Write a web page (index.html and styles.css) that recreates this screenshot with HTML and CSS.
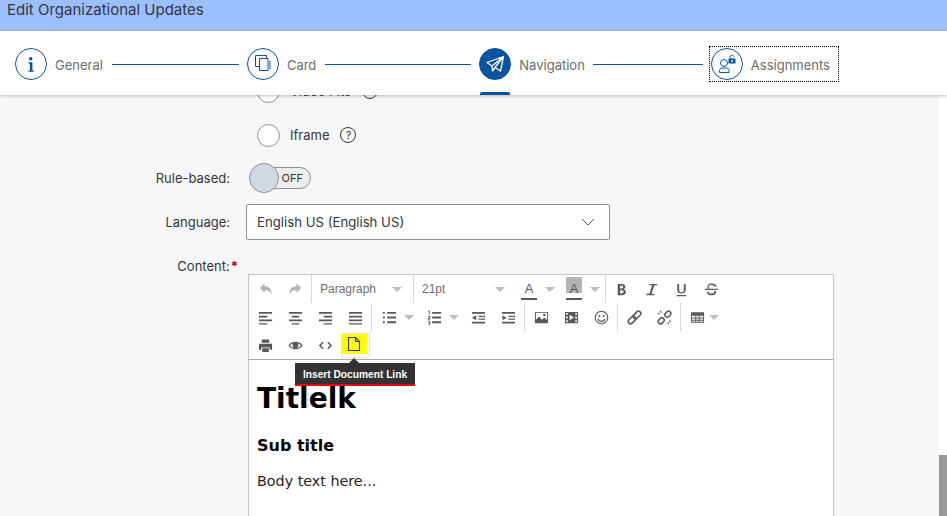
FILE: index.html
```html
<!DOCTYPE html>
<html lang="en">
<head>
  <meta charset="UTF-8" />
  <title>Edit Organizational Updates</title>
  <link rel="stylesheet" href="styles.css">
</head>
<body>

<div class="page">
  <header class="title-bar">Edit Organizational Updates</header>

  <!-- wizard steps -->
  <nav class="steps">
    <div class="step">
      <span class="step-icon">
        <svg viewBox="0 0 32 32" width="32" height="32"><path class="fill" d="M14.200 9.200h3v3h-3zM13.400 14.200h4v8.200h1.400v1.400h-5.400v-1.400h1.400v-6.800h-1.400z"/></svg>
      </span>
      <span class="step-label">General</span>
    </div>
    <span class="step-line line-general"></span>
    <div class="step">
      <span class="step-icon">
        <svg viewBox="0 0 32 32" width="32" height="32"><path class="stroke" d="M12 18.500H8.500V7.500h11V10.500M12.500 10.500h8.500v12h-8.500zM23 12.500v9"/></svg>
      </span>
      <span class="step-label">Card</span>
    </div>
    <span class="step-line line-card"></span>
    <div class="step step-active">
      <span class="step-icon">
        <svg viewBox="0 0 32 32" width="32" height="32"><path class="stroke-white" d="M8 14.500 24.500 8.500 21.500 23 16 19.500 13.500 23 13 18zM13 18 24.500 8.500M16 19.500 24.500 8.500"/></svg>
      </span>
      <span class="step-label">Navigation</span>
    </div>
    <span class="step-line line-nav"></span>
    <div class="step step-focus">
      <span class="step-icon">
        <svg viewBox="0 0 32 32" width="32" height="32"><circle class="stroke" cx="13" cy="15" r="3.500"/><path class="stroke" d="M8.500 24.500v-2c0-1.500 1-2.500 2.500-2.500h4.500c1.500 0 2.500 1 2.500 2.500v2z"/><path class="fill" d="M17.500 10.500h7v5h-7z"/><path class="stroke" d="M19 10.500V9c0-2.400 3.500-2.400 3.800-.3"/><path class="white" d="M20.300 12h1.400v2h-1.400z"/></svg>
      </span>
      <span class="step-label">Assignments</span>
    </div>
  </nav>

  <div class="body-wrap">
    <main class="form">
      <div class="form-row radio-row">
        <span class="form-label"></span>
        <div class="radio-option">
          <span class="radio"></span>
          <span>Video Fits</span>
          <span class="help">?</span>
        </div>
      </div>
      <div class="form-row radio-row">
        <span class="form-label"></span>
        <div class="radio-option">
          <span class="radio"></span>
          <span>Iframe</span>
          <span class="help">?</span>
        </div>
      </div>

      <div class="form-row switch-row">
        <label class="form-label">Rule-based:</label>
        <div class="switch">
          <span class="switch-track">OFF</span>
          <span class="switch-knob"></span>
        </div>
      </div>

      <div class="form-row select-row">
        <label class="form-label">Language:</label>
        <div class="select">
          <span>English US (English US)</span>
          <svg viewBox="0 0 14 8" width="14" height="8"><path d="M1 1l6 6 6-6" fill="none" stroke="#5a5f64" stroke-width="1"/></svg>
        </div>
      </div>

      <div class="form-row content-row">
        <label class="form-label">Content:<em>*</em></label>
        <div class="editor">
          <div class="toolbar">
            <div class="tb-row">
              <button class="tb-btn off"><svg viewBox="0 0 16 16"><path d="M2 6l5-4.500v3c5 0 7.500 3 7.500 9-1.500-3.500-3.500-4.800-7.500-4.800v3z"/></svg></button>
              <button class="tb-btn off"><svg viewBox="0 0 16 16"><path d="M14 6 9 1.500v3c-5 0-7.500 3-7.500 9C3 10 5 8.700 9 8.700v3z"/></svg></button>
              <span class="tb-sep"></span>
              <div class="tb-combo combo-format"><span>Paragraph</span><i class="caret"></i></div>
              <span class="tb-sep"></span>
              <div class="tb-combo combo-size"><span>21pt</span><i class="caret"></i></div>
              <button class="tb-btn letter"><span class="letter-a">A</span><b class="under"></b></button>
              <i class="caret split"></i>
              <button class="tb-btn letter back"><span class="letter-a">A</span><b class="under"></b></button>
              <i class="caret split"></i>
              <span class="tb-sep"></span>
              <button class="tb-btn"><svg viewBox="0 0 16 16"><path fill-rule="evenodd" d="M4 2h4.500c4.500 0 4.500 5 1.500 5.700 4 .6 3.500 6.300-1 6.300H4zM6.500 4v2.900h1.700c2 0 2-2.900 0-2.900zM6.500 8.800V12h2.100c2.200 0 2.200-3.200 0-3.200z"/></svg></button>
              <button class="tb-btn"><svg viewBox="0 0 16 16"><path d="M6 2h8v1.500h-3L8 12.500h3V14H2.500v-1.500h3.200l3-9H6z"/></svg></button>
              <button class="tb-btn"><svg viewBox="0 0 16 16"><path d="M3.500 2h2v6.500c0 3.300 5 3.300 5 0V2h2v6.500c0 5-9 5-9 0zM3 13.800h10v1.300H3z"/></svg></button>
              <button class="tb-btn"><svg viewBox="0 0 16 16"><path d="M1 7.300h14v1.200H1zM11.500 5C11 3 5.500 2.300 5 4.500c-.3 1.300.5 2 1.500 2.500H4C2.600 3 5 1.500 8 1.500c3 0 5 1 5.500 3.500zM10.800 9.500c.8 2-1.300 3-3 2.800-1.500 0-3-.7-3-2H3c.2 3 3 3.800 5 3.800 4 0 5.500-2.200 4.800-4.600z"/></svg></button>
            </div>
            <div class="tb-row">
              <button class="tb-btn"><svg viewBox="0 0 16 16"><path d="M1 2h14v2H1zM1 6h9v2H1zM1 10h14v2H1zM1 14h9v1.500H1z"/></svg></button>
              <button class="tb-btn"><svg viewBox="0 0 16 16"><path d="M1 2h14v2H1zM4 6h8v2H4zM1 10h14v2H1zM4 14h8v1.500H4z"/></svg></button>
              <button class="tb-btn"><svg viewBox="0 0 16 16"><path d="M1 2h14v2H1zM6 6h9v2H6zM1 10h14v2H1zM6 14h9v1.500H6z"/></svg></button>
              <button class="tb-btn"><svg viewBox="0 0 16 16"><path d="M1 2h14v2H1zM1 6h14v2H1zM1 10h14v2H1zM1 14h14v1.500H1z"/></svg></button>
              <span class="tb-sep"></span>
              <button class="tb-btn list"><svg viewBox="0 0 16 16"><path d="M1 2h2v2H1zM1 7h2v2H1zM1 12h2v2H1zM5.500 2H15v2H5.500zM5.500 7H15v2H5.500zM5.500 12H15v2H5.500z"/></svg></button>
              <i class="caret split"></i>
              <button class="tb-btn list-num"><svg viewBox="0 0 16 16"><path d="M5.500 2H15v2H5.500zM5.500 7H15v2H5.500zM5.500 12H15v2H5.500z"/><path d="M1.500 .8h1.500v4H2V2H1.500zM1 6.500h2.500v2.200L2 9.800h1.500v.7H1V9l1.500-1.100v-.7H1zM1 11.500h2.500v4H1v-.7h1.500V14H1.500v-.6h1v-1.200H1z"/></svg></button>
              <i class="caret split-tight"></i>
              <button class="tb-btn"><svg viewBox="0 0 16 16"><path d="M1 2h14v2H1zM8 6h7v1.500H8zM8 9h7v1.500H8zM1 12.500h14v2H1zM1 8.200 5.500 5.500v5.500z"/></svg></button>
              <button class="tb-btn"><svg viewBox="0 0 16 16"><path d="M1 2h14v2H1zM8 6h7v1.500H8zM8 9h7v1.500H8zM1 12.500h14v2H1zM6 8.200 1.500 5.500v5.500z"/></svg></button>
              <span class="tb-sep"></span>
              <button class="tb-btn"><svg viewBox="0 0 16 16"><path fill-rule="evenodd" d="M1 2h14v12H1zM2 3v7.500L5.500 7l3 3.500L11 8l3 3V3z"/><circle cx="11" cy="5.200" r="1.300"/></svg></button>
              <button class="tb-btn"><svg viewBox="0 0 16 16"><path fill-rule="evenodd" d="M1 2h14v12H1zM2.200 3.200v1.800H4V3.200zM2.200 7v2H4V7zM2.200 11v1.800H4V11zM12 3.200V5h1.800V3.200zM12 7v2h1.800V7zM12 11v1.800h1.800V11zM6 5v6l4.500-3z"/></svg></button>
              <button class="tb-btn"><svg viewBox="0 0 16 16"><circle cx="8" cy="8" r="6.700" class="line"/><circle cx="5.800" cy="6.300" r="1.100"/><circle cx="10.200" cy="6.300" r="1.100"/><path class="line" d="M4.300 9.500c1 3.500 6.400 3.500 7.400 0"/></svg></button>
              <span class="tb-sep"></span>
              <button class="tb-btn"><svg viewBox="0 0 16 16"><g transform="rotate(-45 8 8)"><rect class="line-thick" x="-.5" y="5.500" width="9.500" height="5" rx="2.500"/><rect class="line-thick" x="7" y="5.500" width="9.500" height="5" rx="2.500"/></g></svg></button>
              <button class="tb-btn"><svg viewBox="0 0 16 16"><g transform="rotate(-45 8 8)"><rect class="line-thick" x="-.5" y="5.500" width="7" height="5" rx="2.500"/><rect class="line-thick" x="9.500" y="5.500" width="7" height="5" rx="2.500"/></g><path class="line" d="M3.500 .8l1 2.200M.8 3.500l2.200 1M12.500 15.200l-1-2.200M15.200 12.500l-2.200-1"/></svg></button>
              <span class="tb-sep"></span>
              <button class="tb-btn"><svg viewBox="0 0 16 16"><path fill-rule="evenodd" d="M1 2.500h14v11H1zM2 6v2h3.700V6zM6.700 6v2h2.600V6zM10.300 6v2H14V6zM2 9v1.500h3.700V9zM6.700 9v1.500h2.600V9zM10.300 9v1.500H14V9zM2 11.500v1h3.700v-1zM6.700 11.500v1h2.600v-1zM10.300 11.500v1H14v-1z"/></svg></button>
              <i class="caret table-caret"></i>
            </div>
            <div class="tb-row">
              <button class="tb-btn"><svg viewBox="0 0 16 16"><path fill-rule="evenodd" d="M4 1.500h8v3.500H4zM1 6h14v6.500h-2.500V10h-9v2.500H1zM4.500 11h7v4h-7z"/></svg></button>
              <button class="tb-btn"><svg viewBox="0 0 16 16"><path fill-rule="evenodd" d="M.5 8C3 2.800 13 2.800 15.500 8 13 13.200 3 13.200.500 8zM2 8c2.500 3.600 9.500 3.600 12 0-2.500-3.600-9.500-3.600-12 0z"/><circle cx="8" cy="7.800" r="3"/></svg></button>
              <button class="tb-btn"><svg viewBox="0 0 16 16"><path class="line-thick" d="M5.500 4.500 2 8l3.500 3.500M10.500 4.500 14 8l-3.500 3.500"/></svg></button>
              <button class="tb-btn doc-btn"><svg viewBox="0 0 12 14"><path class="line-dark" d="M.5.500h7l4 4v9h-11zM7.500.500v4h4"/></svg></button>
            </div>
          </div>

          <div class="tooltip">Insert Document Link</div>

          <div class="editor-body">
            <h1>Titlelk</h1>
            <h2>Sub title</h2>
            <p>Body text here...</p>
          </div>
        </div>
      </div>
    </main>
    <div class="scrollbar"><span class="thumb"></span></div>
  </div>
</div>

</body>
</html>
```

FILE: styles.css
```css
* {
  box-sizing: border-box;
  margin: 0;
  padding: 0;
}

html, body {
  height: 100%;
  overflow: hidden;
}

body {
  font-family: Inter, "Open Sans", sans-serif;
  color: #32363a;
  background: #fff;
}

.page {
  height: 516px;
  display: flex;
  flex-direction: column;
}

/* title bar */
.title-bar {
  height: 31px;
  background: #9cc0ff;
  padding: 0 7px;
  font-size: 15px;
  line-height: 19px;
}

/* wizard steps */
.steps {
  height: 64px;
  flex: none;
  display: flex;
  align-items: center;
  padding: 2px 0 0 15px;
  background: #fff;
  box-shadow: 0 1px 3px rgba(0, 0, 0, 0.25);
  position: relative;
  z-index: 2;
}

.step {
  display: flex;
  align-items: center;
  gap: 8px;
  position: relative;
  height: 36px;
}

.step-icon {
  width: 32px;
  height: 32px;
  border: 1px solid #0854a0;
  border-radius: 50%;
  display: block;
  overflow: hidden;
  background: #fff;
}

.step-icon svg {
  display: block;
  margin: -1px;
}

.step-label {
  font-size: 13px;
  color: #6a6d70;
  padding-top: 2px;
}

.step-line {
  height: 0;
  border-top: 1px solid #0854a0;
  margin: 0 8px 0 9px;
  flex: none;
}

.line-general { width: 127px; }
.line-card { width: 146px; }
.line-nav { width: 110px; margin-left: 8px; }

.step-active .step-icon {
  background: #0854a0;
}

.step-active::after {
  content: "";
  position: absolute;
  left: 1px;
  bottom: -13px;
  width: 30px;
  height: 3px;
  background: #0854a0;
  border-radius: 2px 2px 0 0;
}

.step-focus {
  border: 1px dotted #000;
  padding: 0 8px 0 1px;
  margin-left: -2px;
}

.fill { fill: #0854a0; }
.white { fill: #fff; }

.stroke {
  fill: none;
  stroke: #0854a0;
  stroke-width: 1;
}

.stroke-white {
  fill: none;
  stroke: #fff;
  stroke-width: 1.300;
  stroke-linejoin: round;
}

/* form */
.body-wrap {
  flex: 1;
  display: flex;
  min-height: 0;
  overflow: hidden;
}

.form {
  flex: 1;
  background: #f7f7f7;
  font-size: 13px;
}

.form-row {
  display: grid;
  grid-template-columns: 230px 1fr;
  align-items: center;
}

.form-label {
  text-align: right;
}

.form-label em {
  color: #bb0000;
  font-style: normal;
  font-weight: 700;
  margin-right: -8px;
  margin-left: 1px;
}

.radio-row {
  height: 44px;
}

/* first row is scrolled under the steps */
.radio-row:first-child {
  margin-top: -26px;
}

.radio-option {
  display: flex;
  align-items: center;
  padding-left: 27px;
}

.radio {
  width: 23px;
  height: 23px;
  border: 1px solid #89919a;
  border-radius: 50%;
  background: #fff;
  margin-right: 10px;
}

.help {
  width: 16px;
  height: 16px;
  margin-left: 11px;
  border: 1px solid #32363a;
  border-radius: 50%;
  font-size: 11px;
  line-height: 14px;
  text-align: center;
}

.switch-row {
  height: 30px;
  margin-top: 6px;
}

.switch {
  position: relative;
  width: 62px;
  height: 30px;
  margin-left: 19px;
}

.switch-track {
  position: absolute;
  left: 14px;
  right: 0;
  top: 4px;
  height: 22px;
  border: 1px solid #89919a;
  border-radius: 11px;
  background: #ededed;
  font-size: 11px;
  line-height: 20px;
  text-align: right;
  padding-right: 7px;
}

.switch-knob {
  position: absolute;
  left: 0;
  top: 0;
  width: 30px;
  height: 30px;
  border: 1px solid #89919a;
  border-radius: 50%;
  background: #d1d8e0;
}

.select-row {
  margin-top: 11px;
}

.select {
  width: 364px;
  height: 36px;
  margin-left: 16px;
  border: 1px solid #89919a;
  border-radius: 2px;
  background: #fff;
  display: flex;
  align-items: center;
  justify-content: space-between;
  padding: 0 14px 0 10px;
  font-size: 13.200px;
}

.content-row {
  align-items: start;
  margin-top: 17px;
}

.content-row .form-label {
  padding-top: 1px;
}

/* rich text editor */
.editor {
  width: 586px;
  margin: 17px 0 0 18px;
  height: 300px;
  border: 1px solid #c5c5c5;
  background: #fff;
  position: relative;
}

.toolbar {
  height: 85px;
  padding-left: 1px;
  border-bottom: 1px solid #a8a8a8;
  font-family: "Liberation Sans", sans-serif;
}

.tb-row {
  height: 28px;
  display: flex;
  align-items: center;
}

.tb-btn {
  width: 30px;
  height: 24px;
  border: 0;
  background: none;
  display: flex;
  align-items: center;
  justify-content: center;
  flex: none;
}

.tb-btn svg {
  width: 15px;
  height: 15px;
  fill: #595959;
  display: block;
  overflow: visible;
}

.tb-btn.off svg {
  fill: #b5b5b5;
}

.tb-sep {
  width: 1px;
  height: 28px;
  background: #d6d6d6;
  flex: none;
  margin: 0 1px;
}

.tb-row:first-child .tb-sep {
  margin-right: 0;
}

.list {
  margin-left: 1px;
}

.tb-combo {
  display: flex;
  align-items: center;
  justify-content: space-between;
  font-size: 12px;
  color: #6f6f6f;
  padding: 0 10px 0 8px;
  height: 24px;
  flex: none;
}

.combo-format { width: 100px; }
.combo-size { width: 100px; padding-right: 9px; }

.caret {
  width: 0;
  height: 0;
  border-left: 5px solid transparent;
  border-right: 5px solid transparent;
  border-top: 5px solid #b8bec4;
  display: block;
  flex: none;
}

.caret.split { margin-right: 5px; }
.caret.split-tight { margin-right: 4px; }

.tb-row:first-child .caret.split {
  margin: 0 4px 0 1px;
}

.table-caret {
  margin-left: -3px;
}

.letter {
  position: relative;
}

.letter-a {
  font-size: 13px;
  color: #595959;
  position: relative;
  top: -1px;
}

.under {
  position: absolute;
  left: 7px;
  right: 7px;
  bottom: 1px;
  height: 2px;
  background: #595959;
}

.back {
  background: linear-gradient(#b4b4b4, #b4b4b4) center top / 16px 16px no-repeat;
}

.line,
.line-thick,
.line-dark {
  fill: none;
  stroke: #595959;
}

.line { stroke-width: 1.200; }
.line-thick { stroke-width: 1.600; }
.line-dark { stroke: #333; stroke-width: 1.100; }

.tb-btn.doc-btn {
  width: 29px;
  height: 25px;
  margin: 1px 0 0 1px;
  padding: 0 3px 4px 0;
  background: linear-gradient(#ffff00, #ffff00) left top / 25px 20px no-repeat;
  border: 1px solid #e4e4e4;
}

.doc-btn svg {
  width: 12px;
  height: 14px;
}

.tooltip {
  position: absolute;
  left: 46px;
  top: 88px;
  width: 120px;
  height: 23px;
  background: #333;
  border-bottom: 2px solid #ee0000;
  color: #fff;
  font: 700 10.200px/23px "Liberation Sans", sans-serif;
  text-align: center;
  z-index: 3;
}

.tooltip::before {
  content: "";
  position: absolute;
  left: 54px;
  top: -5px;
  border-left: 5px solid transparent;
  border-right: 5px solid transparent;
  border-bottom: 5px solid #333;
}

.editor-body {
  padding: 0 8px;
  font-family: "DejaVu Sans", sans-serif;
  font-size: 14.300px;
  color: #222;
}

.editor-body h1 {
  font-size: 28px;
  line-height: 34px;
  margin-top: 22px;
  color: #000;
}

.editor-body h2 {
  font-size: 16px;
  line-height: 20px;
  margin-top: 20px;
  color: #000;
}

.editor-body p {
  margin-top: 17px;
  line-height: 17px;
}

/* scrollbar */
.scrollbar {
  width: 8px;
  flex: none;
  background: #fff;
  position: relative;
}

.thumb {
  position: absolute;
  left: 0;
  right: 0;
  top: 360px;
  height: 100px;
  background: #999;
}
```
